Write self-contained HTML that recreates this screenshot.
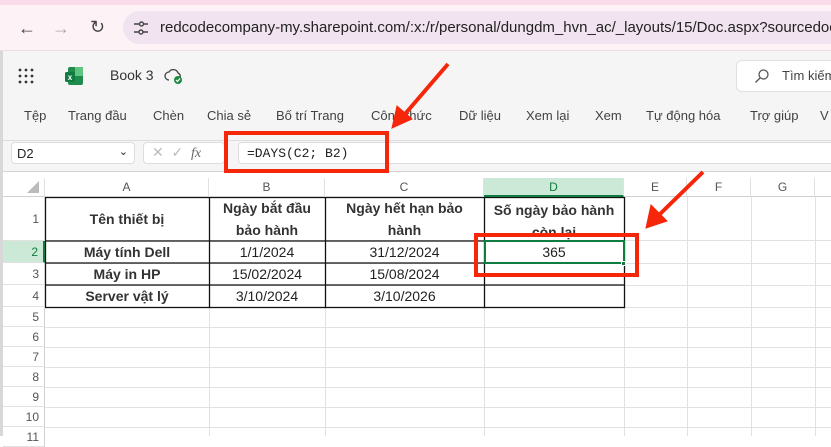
<!DOCTYPE html><html><head><meta charset="utf-8"><style>
*{margin:0;padding:0;box-sizing:border-box}
body{width:831px;height:436px;overflow:hidden;position:relative;background:#fff;font-family:"Liberation Sans",sans-serif;color:#242424}
.a{position:absolute}
.m{font-size:13px;color:#424242;top:108px}
.ch{position:absolute;top:178px;height:19px;font-size:12px;color:#555;text-align:center;line-height:19px;border-right:1px solid #e1e1e1;border-bottom:1px solid #d0d0d0;background:#fff}
.rh{position:absolute;left:3px;width:42px;font-size:12px;color:#555;text-align:right;padding-right:5px;border-bottom:1px solid #e1e1e1;border-right:1px solid #d0d0d0;background:#fff}
.c{position:absolute;font-size:14px;text-align:center;display:flex;align-items:center;justify-content:center;color:#222}
.b{font-weight:bold;color:#333}
</style></head><body>
<div class="a" style="left:0;top:0;width:831px;height:5px;background:#f9dbe9"></div>
<div class="a" style="left:0;top:5px;width:831px;height:46px;background:#fdf3f6;border-bottom:1px solid #eedfe5"></div>
<div class="a" style="left:123px;top:11px;width:708px;height:33px;border-radius:17px 0 0 17px;background:#f1e3ef"></div>
<div class="a" style="left:18px;top:18px;font-size:18px;color:#444">&#8592;</div>
<div class="a" style="left:52px;top:18px;font-size:18px;color:#aaa">&#8594;</div>
<div class="a" style="left:90px;top:17px;font-size:18px;color:#444">&#8635;</div>
<svg class="a" style="left:133px;top:20px" width="16" height="16"><path d="M1 4h6M10 4h5M1 12h5M10 12h5" stroke="#444" stroke-width="1.5"/><circle cx="8.5" cy="4" r="2" fill="none" stroke="#444" stroke-width="1.4"/><circle cx="8" cy="12" r="2" fill="none" stroke="#444" stroke-width="1.4"/></svg>
<div class="a" style="left:160px;top:19px;font-size:15px;color:#222;white-space:nowrap">redcodecompany-my.sharepoint.com/:x:/r/personal/dungdm_hvn_ac/_layouts/15/Doc.aspx?sourcedoc</div>
<div class="a" style="left:3px;top:51px;width:828px;height:120px;background:#f5f5f5"></div>
<div class="a" style="left:0;top:51px;width:3px;height:385px;background:#d8d8d8"></div>
<svg class="a" style="left:18px;top:68px" width="16" height="16"><g fill="#333"><circle cx="2" cy="2" r="1.4"/><circle cx="8" cy="2" r="1.4"/><circle cx="14" cy="2" r="1.4"/><circle cx="2" cy="8" r="1.4"/><circle cx="8" cy="8" r="1.4"/><circle cx="14" cy="8" r="1.4"/><circle cx="2" cy="14" r="1.4"/><circle cx="8" cy="14" r="1.4"/><circle cx="14" cy="14" r="1.4"/></g></svg>
<svg class="a" style="left:64px;top:66px" width="20" height="20"><rect x="4" y="1" width="15" height="18" rx="2" fill="#1f8b4c"/><rect x="11" y="1" width="8" height="9" fill="#5ec47f"/><rect x="1" y="6" width="10" height="10" rx="1.5" fill="#107c41"/><text x="6" y="14" font-size="8" fill="#fff" text-anchor="middle" font-family="Liberation Sans" font-weight="bold">x</text></svg>
<div class="a" style="left:110px;top:67px;font-size:14px;color:#333">Book 3</div>
<svg class="a" style="left:164px;top:66px" width="20" height="20"><path d="M5 14a4 4 0 0 1 0-8a5 5 0 0 1 9 1a3.5 3.5 0 0 1 1 6" fill="none" stroke="#444" stroke-width="1.3"/><circle cx="14" cy="14" r="4" fill="#1e8a44"/><path d="M12 14l1.5 1.5 2.5-3" stroke="#fff" stroke-width="1.2" fill="none"/></svg>
<div class="a" style="left:736px;top:60px;width:100px;height:32px;border:1px solid #e0e0e0;border-radius:6px;background:#fff"></div>
<svg class="a" style="left:754px;top:68px" width="16" height="16"><circle cx="9.5" cy="6.5" r="4.5" fill="none" stroke="#555" stroke-width="1.3"/><path d="M6 10l-4.5 4.5" stroke="#555" stroke-width="1.3"/></svg>
<div class="a" style="left:782px;top:68px;font-size:13px;color:#444;white-space:nowrap">Tìm kiếm</div>
<div class="a m" style="left:24px">Tệp</div>
<div class="a m" style="left:68px">Trang đầu</div>
<div class="a m" style="left:153px">Chèn</div>
<div class="a m" style="left:207px">Chia sẻ</div>
<div class="a m" style="left:276px">Bố trí Trang</div>
<div class="a m" style="left:371px">Công thức</div>
<div class="a m" style="left:459px">Dữ liệu</div>
<div class="a m" style="left:526px">Xem lại</div>
<div class="a m" style="left:595px">Xem</div>
<div class="a m" style="left:646px">Tự động hóa</div>
<div class="a m" style="left:750px">Trợ giúp</div>
<div class="a m" style="left:820px">V</div>
<div class="a" style="left:3px;top:140px;width:828px;height:1px;background:#ddd"></div>
<div class="a" style="left:3px;top:141px;width:828px;height:30px;background:#f5f5f5"></div>
<div class="a" style="left:11px;top:142px;width:124px;height:22px;border:1px solid #ddd;border-radius:4px;background:#fff;font-size:13px;padding:3px 5px">D2<span style="position:absolute;right:6px;top:2px;font-size:11px">&#8964;</span></div>
<div class="a" style="left:143px;top:142px;width:82px;height:22px;border:1px solid #ddd;border-radius:4px;background:#fff;font-size:14px;color:#bbb;padding:1px 8px">&#10005;&nbsp;&nbsp;&#10003;&nbsp;&nbsp;<i style="color:#666;font-family:'Liberation Serif'">fx</i></div>
<div class="a" style="left:238px;top:142px;width:600px;height:22px;border:1px solid #ddd;border-radius:4px 0 0 4px;background:#fff;font-family:'Liberation Mono',monospace;font-size:13px;padding:3px 8px;color:#222">=DAYS(C2; B2)</div>
<div class="a" style="left:3px;top:171px;width:828px;height:1px;background:#d4d4d4"></div>
<div class="a" style="left:3px;top:172px;width:828px;height:6px;background:#fff"></div>
<div class="ch" style="left:3px;width:42px"><svg width="14" height="14" style="position:absolute;right:4px;bottom:2px"><path d="M13 1V13H1Z" fill="#bbb"/></svg></div>
<div class="ch" style="left:45px;width:164px">A</div>
<div class="ch" style="left:209px;width:116px">B</div>
<div class="ch" style="left:325px;width:159px">C</div>
<div class="ch" style="left:484px;width:140px;background:#cbe9d6;color:#107c41;border-bottom:2px solid #107c41">D</div>
<div class="ch" style="left:624px;width:63px">E</div>
<div class="ch" style="left:687px;width:64px">F</div>
<div class="ch" style="left:751px;width:64px">G</div>
<div class="ch" style="left:815px;width:30px"></div>
<svg class="a" style="left:45px;top:197px" width="786" height="239"><g stroke="#e1e1e1" stroke-width="1"><path d="M0 66.5H786M0 88.5H786M0 110.5H786M0 130.5H786M0 150.5H786M0 170.5H786M0 190.5H786M0 210.5H786M0 230.5H786M0 43.5H786"/><path d="M164.5 0V239M280.5 0V239M439.5 0V239M579.5 0V239M642.5 0V239M706.5 0V239M770.5 0V239"/></g>
<g stroke="#111" stroke-width="1.3" fill="none"><rect x="0.5" y="0.5" width="579" height="110"/><path d="M0 44H579M0 66H579M0 88H579M164.5 0V110M280.5 0V110M439.5 0V110"/></g></svg>
<div class="rh" style="top:197px;height:44px;line-height:44px">1</div>
<div class="rh" style="top:241px;height:22px;line-height:22px;background:#cbe9d6;color:#107c41;border-right:2px solid #107c41">2</div>
<div class="rh" style="top:263px;height:22px;line-height:22px">3</div>
<div class="rh" style="top:285px;height:22px;line-height:22px">4</div>
<div class="rh" style="top:307px;height:20px;line-height:20px">5</div>
<div class="rh" style="top:327px;height:20px;line-height:20px">6</div>
<div class="rh" style="top:347px;height:20px;line-height:20px">7</div>
<div class="rh" style="top:367px;height:20px;line-height:20px">8</div>
<div class="rh" style="top:387px;height:20px;line-height:20px">9</div>
<div class="rh" style="top:407px;height:20px;line-height:20px">10</div>
<div class="rh" style="top:427px;height:20px;line-height:20px">11</div>
<div class="c b" style="left:45px;top:197px;width:164px;height:44px">Tên thiết bị</div>
<div class="c b" style="left:209px;top:197px;width:116px;height:44px;line-height:22px">Ngày bắt đầu<br>bảo hành</div>
<div class="c b" style="left:325px;top:197px;width:159px;height:44px;line-height:22px">Ngày hết hạn bảo<br>hành</div>
<div class="c b" style="left:484px;top:197px;width:140px;height:44px;line-height:22px;align-items:flex-start;padding-top:2px;overflow:hidden">Số ngày bảo hành<br>còn lại</div>
<div class="c b" style="left:45px;top:241px;width:164px;height:22px">Máy tính Dell</div>
<div class="c" style="left:209px;top:241px;width:116px;height:22px">1/1/2024</div>
<div class="c" style="left:325px;top:241px;width:159px;height:22px">31/12/2024</div>
<div class="c" style="left:484px;top:241px;width:140px;height:22px">365</div>
<div class="c b" style="left:45px;top:263px;width:164px;height:22px">Máy in HP</div>
<div class="c" style="left:209px;top:263px;width:116px;height:22px">15/02/2024</div>
<div class="c" style="left:325px;top:263px;width:159px;height:22px">15/08/2024</div>
<div class="c b" style="left:45px;top:285px;width:164px;height:22px">Server vật lý</div>
<div class="c" style="left:209px;top:285px;width:116px;height:22px">3/10/2024</div>
<div class="c" style="left:325px;top:285px;width:159px;height:22px">3/10/2026</div>
<div class="a" style="left:484px;top:240px;width:141px;height:24px;border:2px solid #107c41"></div>
<div class="a" style="left:621px;top:261px;width:5px;height:5px;background:#107c41;border:1px solid #fff"></div>
<div class="a" style="left:224px;top:131px;width:165px;height:42px;border:4px solid #f5260a"></div>
<div class="a" style="left:474px;top:233px;width:165px;height:44px;border:4px solid #f5260a"></div>
<svg class="a" style="left:0;top:0" width="831" height="436"><g fill="#f5260a" stroke="#f5260a" stroke-width="4"><path d="M448 64L405 114" fill="none"/><path d="M392 128L397 106L412 119Z" stroke-width="1"/><path d="M703 172L660 214" fill="none"/><path d="M646 228L651 205L667 221Z" stroke-width="1"/></g></svg>
</body></html>
